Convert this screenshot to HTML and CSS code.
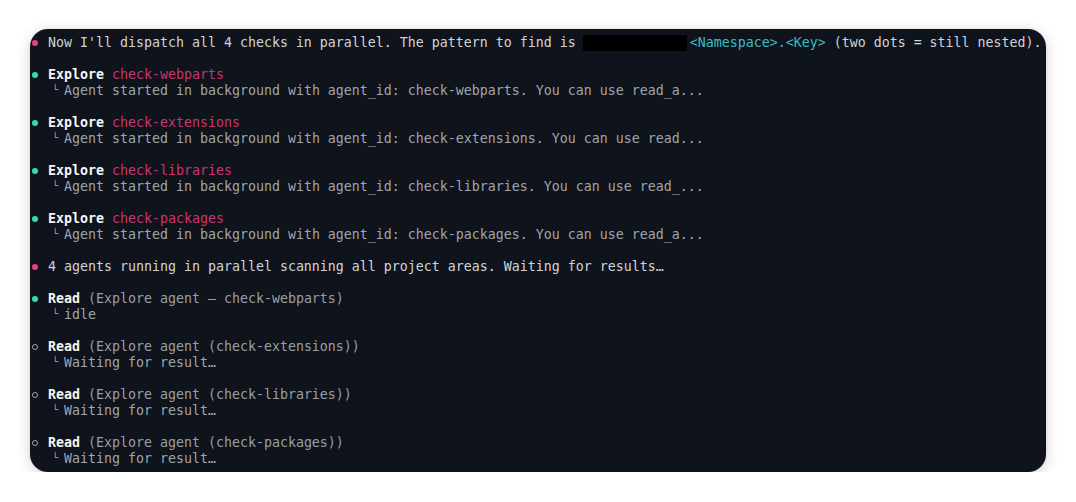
FILE: index.html
```html
<!DOCTYPE html>
<html>
<head>
<meta charset="utf-8">
<link rel="stylesheet" href="styles.css">
</head>
<body>
<div class="term">
  <div class="entry">
    <span class="bullet"><span class="dot pink"></span></span>
    <div class="body">
      <div class="line main">Now I'll dispatch all 4 checks in parallel. The pattern to find is <span class="redact"></span><span class="cyan">&lt;Namespace&gt;.&lt;Key&gt;</span> (two dots = still nested).</div>
    </div>
  </div>

  <div class="entry">
    <span class="bullet"><span class="dot green"></span></span>
    <div class="body">
      <div class="line"><b class="tool">Explore</b> <span class="pinktxt">check-webparts</span></div>
      <div class="line sub"><span class="elbow">└</span>Agent started in background with agent_id: check-webparts. You can use read_a...</div>
    </div>
  </div>

  <div class="entry">
    <span class="bullet"><span class="dot green"></span></span>
    <div class="body">
      <div class="line"><b class="tool">Explore</b> <span class="pinktxt">check-extensions</span></div>
      <div class="line sub"><span class="elbow">└</span>Agent started in background with agent_id: check-extensions. You can use read...</div>
    </div>
  </div>

  <div class="entry">
    <span class="bullet"><span class="dot green"></span></span>
    <div class="body">
      <div class="line"><b class="tool">Explore</b> <span class="pinktxt">check-libraries</span></div>
      <div class="line sub"><span class="elbow">└</span>Agent started in background with agent_id: check-libraries. You can use read_...</div>
    </div>
  </div>

  <div class="entry">
    <span class="bullet"><span class="dot green"></span></span>
    <div class="body">
      <div class="line"><b class="tool">Explore</b> <span class="pinktxt">check-packages</span></div>
      <div class="line sub"><span class="elbow">└</span>Agent started in background with agent_id: check-packages. You can use read_a...</div>
    </div>
  </div>

  <div class="entry">
    <span class="bullet"><span class="dot pink"></span></span>
    <div class="body">
      <div class="line main">4 agents running in parallel scanning all project areas. Waiting for results…</div>
    </div>
  </div>

  <div class="entry">
    <span class="bullet"><span class="dot green"></span></span>
    <div class="body">
      <div class="line"><b class="tool">Read</b> <span class="muted">(Explore agent — check-webparts)</span></div>
      <div class="line sub"><span class="elbow">└</span>idle</div>
    </div>
  </div>

  <div class="entry">
    <span class="bullet"><span class="ring"></span></span>
    <div class="body">
      <div class="line"><b class="tool">Read</b> <span class="muted">(Explore agent (check-extensions))</span></div>
      <div class="line sub"><span class="elbow">└</span>Waiting for result…</div>
    </div>
  </div>

  <div class="entry">
    <span class="bullet"><span class="ring"></span></span>
    <div class="body">
      <div class="line"><b class="tool">Read</b> <span class="muted">(Explore agent (check-libraries))</span></div>
      <div class="line sub"><span class="elbow">└</span>Waiting for result…</div>
    </div>
  </div>

  <div class="entry">
    <span class="bullet"><span class="ring"></span></span>
    <div class="body">
      <div class="line"><b class="tool">Read</b> <span class="muted">(Explore agent (check-packages))</span></div>
      <div class="line sub"><span class="elbow">└</span>Waiting for result…</div>
    </div>
  </div>
</div>
</body>
</html>
```

FILE: styles.css
```css
html, body {
  margin: 0;
  padding: 0;
  background: #ffffff;
}

body {
  padding: 29px 30px 0 30px;
}

.term {
  width: 1016px;
  height: 443px;
  box-sizing: border-box;
  background: #0e131c;
  border-radius: 18px;
  box-shadow: 0 3px 14px rgba(0, 0, 0, 0.18), 0 0 2px rgba(0, 0, 0, 0.12);
  padding: 6px 0 0 0;
  display: flex;
  flex-direction: column;
  gap: 16px;
  overflow: hidden;
  font-family: "DejaVu Sans Mono", "Liberation Mono", monospace;
  font-size: 13.29px;
  color: #d0d3d8;
}

.entry {
  display: flex;
}

.bullet {
  width: 18px;
  flex: none;
  height: 16px;
  display: flex;
  align-items: center;
  justify-content: flex-start;
  padding-left: 2px;
  box-sizing: border-box;
}

.dot {
  width: 6px;
  height: 6px;
  border-radius: 50%;
}

.dot.pink { background: #ec3d8c; }
.dot.green { background: #38dcb4; }

.ring {
  width: 4px;
  height: 4px;
  border: 1px solid #a3a8b0;
  border-radius: 50%;
}

.body {
  display: flex;
  flex-direction: column;
}

.line {
  height: 16px;
  line-height: 16px;
  white-space: pre;
}

.main { color: #d0d3d8; }

.tool {
  color: #f5f6f7;
  font-weight: bold;
}

.pinktxt { color: #c93572; }
.cyan { color: #3dbcc6; }
.muted { color: #9a9fa7; }

.sub { color: #a0a5ad; }

.elbow {
  display: inline-block;
  width: 16px;
  padding-left: 4px;
  box-sizing: border-box;
  font-size: 10px;
  line-height: 14px;
  color: #a0a5ad;
  vertical-align: top;
}

.redact {
  display: inline-block;
  width: 104px;
  height: 16px;
  background: #000000;
  vertical-align: top;
  margin-left: -1px;
  margin-right: 3px;
}
```
